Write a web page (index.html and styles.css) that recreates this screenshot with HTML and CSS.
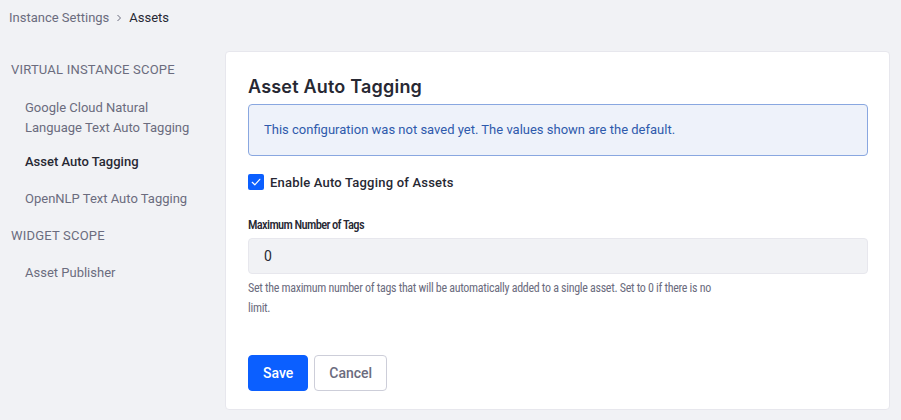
FILE: index.html
```html
<!DOCTYPE html>
<html>
<head>
<meta charset="utf-8">
<link rel="stylesheet" href="styles.css">
</head>
<body>
<nav class="breadcrumb">
  <span class="crumb">Instance Settings</span>
  <svg class="sep" viewBox="0 0 8 8" width="8" height="8"><path d="M2.5 1 L5.5 4 L2.5 7" fill="none" stroke="#6b6c7e" stroke-width="1"/></svg>
  <span class="crumb current">Assets</span>
</nav>
<div class="layout">
  <aside class="sidebar">
    <div class="scope">VIRTUAL INSTANCE SCOPE</div>
    <ul class="nav">
      <li class="nav-item">Google Cloud Natural Language Text Auto Tagging</li>
      <li class="nav-item active">Asset Auto Tagging</li>
      <li class="nav-item">OpenNLP Text Auto Tagging</li>
    </ul>
    <div class="scope">WIDGET SCOPE</div>
    <ul class="nav second">
      <li class="nav-item">Asset Publisher</li>
    </ul>
  </aside>
  <main class="card">
    <h2 class="title">Asset Auto Tagging</h2>
    <div class="alert">This configuration was not saved yet. The values shown are the default.</div>
    <label class="check-row">
      <span class="checkbox"><svg viewBox="0 0 16 16" width="16" height="16"><path d="M4.2 8.3 L6.8 10.8 L11.8 5.3" fill="none" stroke="#fff" stroke-width="1.2" stroke-linecap="round" stroke-linejoin="round"/></svg></span>
      <span class="check-label">Enable Auto Tagging of Assets</span>
    </label>
    <div class="field">
      <div class="field-label">Maximum Number of Tags</div>
      <div class="input">0</div>
      <div class="help">Set the maximum number of tags that will be automatically added to a single asset. Set to 0 if there is no limit.</div>
    </div>
    <div class="actions">
      <button class="btn primary">Save</button>
      <button class="btn secondary">Cancel</button>
    </div>
  </main>
</div>
</body>
</html>
```
FILE: styles.css
```css
* { box-sizing: border-box; }
html, body {
  margin: 0;
  padding: 0;
  background: #f1f2f5;
  font-family: Roboto, "Noto Sans", sans-serif;
  color: #272833;
}
.breadcrumb {
  display: flex;
  align-items: center;
  gap: 6px;
  height: 34px;
  padding: 0 0 0 9px;
  font-size: 13px;
}
.crumb { color: #6b6c7e; }
.crumb.current { color: #272833; }
.sep { margin-top: 1px; }
.layout {
  display: flex;
  padding-top: 17px;
  padding-right: 11px;
}
.sidebar {
  width: 225px;
  flex: none;
  padding: 11px 0 0 11px;
}
.scope {
  font-size: 13px;
  color: #6b6c7e;
  line-height: 16px;
  letter-spacing: 0.2px;
}
.nav {
  list-style: none;
  margin: 14px 0 7px;
  padding: 0 0 0 14px;
}
.nav.second { margin-top: 13px; }
.nav-item {
  font-size: 13px;
  line-height: 20px;
  color: #6b6c7e;
  padding: 5px 20px 12px 0;
}
.nav-item:first-child { padding-top: 6px; }
.nav:not(.second) .nav-item:first-child { padding-bottom: 9px; }
.nav-item.active {
  color: #272833;
  font-weight: 500;
}
.card {
  flex: 1;
  background: #fff;
  border: 1px solid #e7e7ed;
  border-radius: 4px;
  padding: 23px 21px 17px 22px;
  height: 359px;
}
.title {
  margin: 0 0 5px;
  font-family: Inter, Roboto, sans-serif;
  font-size: 18px;
  font-weight: 600;
  line-height: 24px;
  letter-spacing: 0.2px;
  color: #272833;
}
.alert {
  background: #eef2fa;
  border: 1px solid #89a7e0;
  border-radius: 4px;
  color: #2e5aac;
  font-size: 13px;
  line-height: 20px;
  padding: 15px 15px 15px 15px;
  height: 52px;
}
.check-row {
  display: flex;
  align-items: center;
  gap: 6px;
  margin-top: 18px;
}
.checkbox {
  width: 16px;
  height: 16px;
  border-radius: 2px;
  background: #0b5fff;
  display: flex;
}
.check-label {
  font-size: 13px;
  font-weight: 500;
  letter-spacing: 0.2px;
  color: #272833;
}
.field { margin-top: 26px; }
.field-label {
  font-family: "Roboto Condensed", "Liberation Sans Narrow", "DejaVu Sans Condensed", Roboto, sans-serif;
  font-size: 12.5px;
  font-weight: 500;
  line-height: 18px;
  margin-bottom: 4px;
  letter-spacing: -0.65px;
}
.input {
  height: 36px;
  background: #f1f2f5;
  border: 1px solid #e7e7ed;
  border-radius: 4px;
  padding: 0 15px;
  display: flex;
  align-items: center;
  font-size: 14px;
  color: #272833;
}
.help {
  margin-top: 4px;
  max-width: 470px;
  font-family: "Roboto Condensed", "Liberation Sans Narrow", "DejaVu Sans Condensed", Roboto, sans-serif;
  font-size: 12px;
  line-height: 20px;
  color: #6b6c7e;
  letter-spacing: -0.3px;
}
.actions {
  display: flex;
  gap: 6px;
  margin-top: 37px;
}
.btn {
  height: 36px;
  border-radius: 4px;
  font-family: inherit;
  font-size: 14px;
  font-weight: 500;
  padding: 0 14px;
  cursor: pointer;
}
.btn.primary {
  background: #0b5fff;
  border: 1px solid #0b5fff;
  color: #fff;
}
.btn.secondary {
  background: #fff;
  border: 1px solid #cdced9;
  color: #6b6c7e;
}
```
